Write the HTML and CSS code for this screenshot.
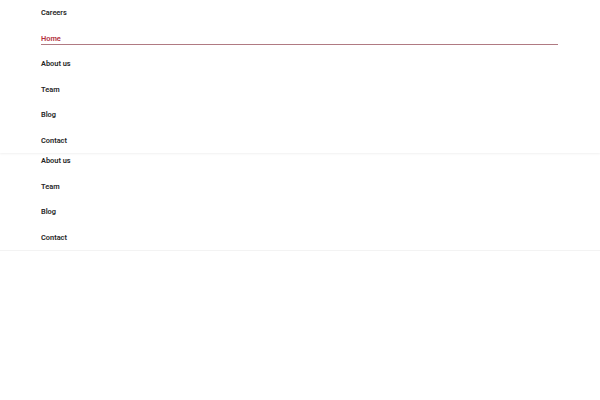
FILE: index.html
```html
<!DOCTYPE html>
<html lang="en">
<head>
<meta charset="utf-8">
<title>Menu</title>
<link rel="stylesheet" href="styles.css">
</head>
<body>
<nav class="panel panel-top">
  <ul class="menu">
    <li class="item"><a class="link" href="#">Careers</a></li>
    <li class="item"><a class="link active" href="#">Home</a></li>
    <li class="item"><a class="link" href="#">About us</a></li>
    <li class="item"><a class="link" href="#">Team</a></li>
    <li class="item"><a class="link" href="#">Blog</a></li>
    <li class="item"><a class="link" href="#">Contact</a></li>
  </ul>
</nav>
<nav class="panel panel-bottom">
  <ul class="menu">
    <li class="item"><a class="link" href="#">About us</a></li>
    <li class="item"><a class="link" href="#">Team</a></li>
    <li class="item"><a class="link" href="#">Blog</a></li>
    <li class="item"><a class="link" href="#">Contact</a></li>
  </ul>
</nav>
</body>
</html>
```
FILE: styles.css
```css
html, body {
  margin: 0;
  padding: 0;
  background: #ffffff;
}
body {
  font-family: "Roboto", sans-serif;
  color: #222222;
}
.panel {
  background: #ffffff;
  box-shadow: 0 1px 2px rgba(0, 0, 0, 0.06);
}
.panel-top {
  position: relative;
  z-index: 2;
  height: 153px;
}
.panel-bottom {
  position: relative;
  z-index: 1;
  margin-top: -5px;
  border-bottom: 1px solid #f3f3f3;
}
.menu {
  list-style: none;
  margin: 0;
  padding: 0 42px 0 41px;
}
.item {
  height: 25.5px;
  box-sizing: border-box;
  padding-top: 8px;
}
.link {
  display: block;
  font-size: 7.4px;
  font-weight: 600;
  line-height: 9px;
  padding-bottom: 1px;
  border-bottom: 1px solid transparent;
  color: #262626;
  text-decoration: none;
}
.link.active {
  color: #b3303c;
  border-bottom-color: #b07a82;
}
```
